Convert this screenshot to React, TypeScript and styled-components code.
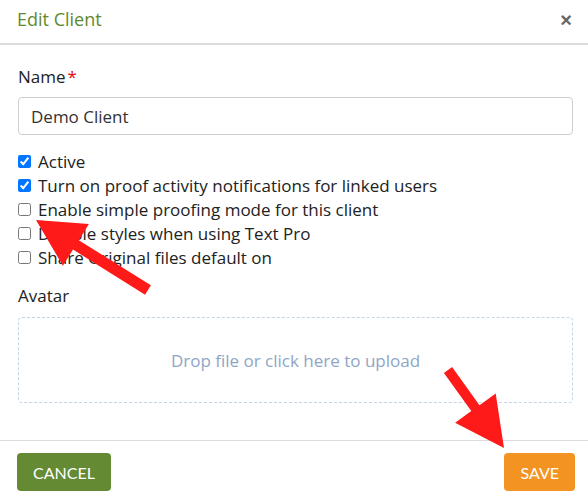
import React, { useState } from "react";
import styled, { createGlobalStyle } from "styled-components";

const GlobalStyle = createGlobalStyle`
  *, *::before, *::after {
    box-sizing: border-box;
  }
  html, body {
    margin: 0;
    padding: 0;
    background: #fff;
  }
  body {
    font-family: "Open Sans", "Liberation Sans", sans-serif;
    color: #222;
  }
`;

const options = [
  { label: "Active", checked: true },
  { label: "Turn on proof activity notifications for linked users", checked: true },
  { label: "Enable simple proofing mode for this client", checked: false },
  { label: "Disable styles when using Text Pro", checked: false },
  { label: "Share Original files default on", checked: false },
];

const App = () => {
  const [name, setName] = useState("Demo Client");
  const [checks, setChecks] = useState(options.map((o) => o.checked));

  const onToggle = (index: number) => {
    const next = [...checks];
    next[index] = !next[index];
    setChecks(next);
  };

  return (
    <SModal>
      <GlobalStyle />
      <SHeader>
        <STitle>Edit Client</STitle>
        <SClose aria-label="close">×</SClose>
      </SHeader>

      <SBody>
        <SLabel>
          Name<SRequired>*</SRequired>
        </SLabel>
        <SInput value={name} onChange={(e) => setName(e.target.value)} />

        <SChecklist>
          {options.map((opt, index) => (
            <SCheckRow key={index}>
              <input
                type="checkbox"
                checked={checks[index]}
                onChange={() => onToggle(index)}
              />
              {opt.label}
            </SCheckRow>
          ))}
        </SChecklist>

        <SLabel>Avatar</SLabel>
        <SDropzone>Drop file or click here to upload</SDropzone>
      </SBody>

      <SFooter>
        <SButton $color="#648a33">CANCEL</SButton>
        <SButton $color="#f39422">SAVE</SButton>
      </SFooter>

      {/* annotation arrows drawn over the dialog */}
      <SOverlay width="588" height="498" viewBox="0 0 588 498">
        <polygon
          fill="#ff1a1a"
          points="36,220 88.9,224.1 78.8,240.2 150.9,285.3 145.1,294.7 73,249.6 62.9,265.7"
        />
        <polygon
          fill="#ff1a1a"
          points="504,448 455.1,422.8 471.3,411.1 443.9,372.9 452.1,367.1 479.5,405.3 495.7,393.6"
        />
      </SOverlay>
    </SModal>
  );
};

const SModal = styled.div`
  position: relative;
  width: 588px;
  height: 498px;
  display: flex;
  flex-direction: column;
  overflow: hidden;
`;

const SHeader = styled.div`
  height: 45px;
  flex-shrink: 0;
  display: flex;
  align-items: center;
  justify-content: space-between;
  padding: 0 16px 0 17px;
  border-bottom: 2px solid #dcdcdc;
`;

const STitle = styled.h3`
  margin: 0;
  font-size: 18px;
  font-weight: 400;
  color: #5f8a2c;
  padding-bottom: 5px;
`;

const SClose = styled.button`
  border: none;
  background: none;
  padding: 0;
  font-size: 20px;
  font-weight: 700;
  color: #666;
  line-height: 1;
  margin-bottom: 4px;
  cursor: pointer;
`;

const SBody = styled.div`
  flex: 1;
  padding: 22px 15px 0 18px;
  display: flex;
  flex-direction: column;
`;

const SLabel = styled.label`
  font-size: 17px;
  line-height: 20px;
  color: #222;
`;

const SRequired = styled.span`
  color: #e3000f;
  margin-left: 2px;
`;

const SInput = styled.input`
  margin-top: 10px;
  height: 38px;
  border: 1px solid #cfcfcf;
  border-radius: 4px;
  padding: 0 12px;
  font-family: inherit;
  font-size: 17px;
  color: #333;
  outline: none;
`;

const SChecklist = styled.div`
  margin-top: 14px;
  margin-bottom: 17px;
  display: flex;
  flex-direction: column;
`;

const SCheckRow = styled.label`
  display: flex;
  align-items: center;
  gap: 7px;
  height: 24px;
  font-size: 17px;
  color: #222;

  input {
    margin: 0;
    width: 13px;
    height: 13px;
  }
`;

const SDropzone = styled.div`
  margin-top: 11px;
  height: 86px;
  border: 1px dashed #c3d4e6;
  border-radius: 4px;
  display: flex;
  align-items: center;
  justify-content: center;
  font-size: 17px;
  color: #8ea6c6;
  cursor: pointer;
`;

const SFooter = styled.div`
  height: 58px;
  flex-shrink: 0;
  border-top: 1px solid #dcdcdc;
  padding: 12px 13px 0 17px;
  display: flex;
  justify-content: space-between;
  align-items: flex-start;
`;

const SButton = styled.button<{ $color: string }>`
  height: 38px;
  padding: 0 16px;
  border: none;
  border-radius: 4px;
  background-color: ${(p) => p.$color};
  color: #fff;
  font-family: Lato, "Open Sans", sans-serif;
  font-size: 16px;
  cursor: pointer;
`;

const SOverlay = styled.svg`
  position: absolute;
  left: 0;
  top: 0;
  pointer-events: none;
`;

export default App;
